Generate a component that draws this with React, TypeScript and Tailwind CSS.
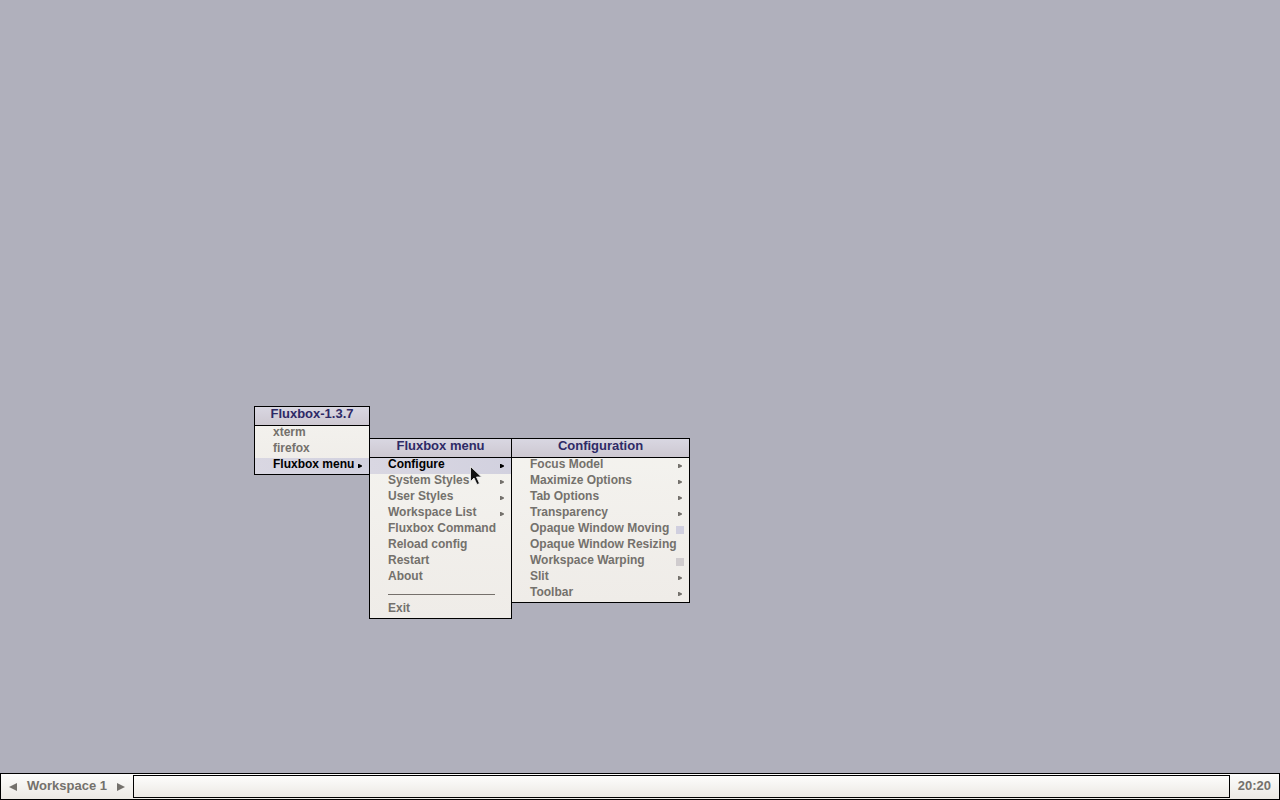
import type { CSSProperties } from 'react';

type Entry = {
  label: string;
  kind?: 'submenu' | 'toggle-on' | 'toggle-off' | 'separator';
  active?: boolean;
};

type MenuData = {
  title: string;
  x: number;
  y: number;
  width: number;
  entries: Entry[];
};

const menus: MenuData[] = [
  {
    title: 'Fluxbox-1.3.7',
    x: 254,
    y: 406,
    width: 116,
    entries: [
      { label: 'xterm' },
      { label: 'firefox' },
      { label: 'Fluxbox menu', kind: 'submenu', active: true },
    ],
  },
  {
    title: 'Fluxbox menu',
    x: 369,
    y: 438,
    width: 143,
    entries: [
      { label: 'Configure', kind: 'submenu', active: true },
      { label: 'System Styles', kind: 'submenu' },
      { label: 'User Styles', kind: 'submenu' },
      { label: 'Workspace List', kind: 'submenu' },
      { label: 'Fluxbox Command' },
      { label: 'Reload config' },
      { label: 'Restart' },
      { label: 'About' },
      { label: '', kind: 'separator' },
      { label: 'Exit' },
    ],
  },
  {
    title: 'Configuration',
    x: 511,
    y: 438,
    width: 179,
    entries: [
      { label: 'Focus Model', kind: 'submenu' },
      { label: 'Maximize Options', kind: 'submenu' },
      { label: 'Tab Options', kind: 'submenu' },
      { label: 'Transparency', kind: 'submenu' },
      { label: 'Opaque Window Moving', kind: 'toggle-on' },
      { label: 'Opaque Window Resizing' },
      { label: 'Workspace Warping', kind: 'toggle-off' },
      { label: 'Slit', kind: 'submenu' },
      { label: 'Toolbar', kind: 'submenu' },
    ],
  },
];

function Bullet() {
  return (
    <svg className="mr-[7px] h-1 w-1 shrink-0" viewBox="0 0 4 4" fill="currentColor" aria-hidden="true">
      <path d="M0 0H1L4 1.500V2.500L1 4H0Z" />
    </svg>
  );
}

function MenuEntry({ entry }: { entry: Entry }) {
  if (entry.kind === 'separator') {
    return (
      <li className="h-4 pt-2 pr-4 pl-[18px]" role="separator">
        <div className="h-px bg-[#75706b]" />
      </li>
    );
  }

  return (
    <li>
      <button
        type="button"
        className={`flex h-4 w-full items-center justify-between pl-[18px] text-left whitespace-nowrap ${
          entry.active ? 'bg-linear-to-r from-[#d9d7e2] to-[#d2d1df] text-black' : 'text-[#74716c]'
        }`}
      >
        <span className="h-4 leading-3">{entry.label}</span>
        {entry.kind === 'submenu' && <Bullet />}
        {entry.kind === 'toggle-on' && <span className="mr-[5px] size-2 shrink-0 bg-[#d0cfdf]" />}
        {entry.kind === 'toggle-off' && <span className="mr-[5px] size-2 shrink-0 bg-[#d0ccce]" />}
      </button>
    </li>
  );
}

function Menu({ menu }: { menu: MenuData }) {
  const place: CSSProperties = { left: menu.x, top: menu.y, width: menu.width };

  return (
    <section className="absolute border border-black bg-linear-to-b from-[#f4f3ef] to-[#efece8]" style={place}>
      <h2 className="h-[19px] border-b border-black bg-linear-to-b from-[#d9d7e2] to-[#cdc8d1] text-center text-[13px] leading-[14px] text-[#2e2a66]">
        {menu.title}
      </h2>
      <ul>
        {menu.entries.map((entry, index) => (
          <MenuEntry key={index} entry={entry} />
        ))}
      </ul>
    </section>
  );
}

function Toolbar() {
  return (
    <footer className="flex h-[27px] border border-black bg-linear-to-b from-[#fdfdfc] to-[#ece9e4] text-[#74716c]">
      <div className="flex items-center">
        <button type="button" aria-label="Previous workspace" className="px-2">
          <svg className="h-2 w-2" viewBox="0 0 8 8" fill="currentColor">
            <path d="M8 0V8L0 4Z" />
          </svg>
        </button>
        <span className="px-0.5 pb-0.5 text-[13px] leading-4">Workspace 1</span>
        <button type="button" aria-label="Next workspace" className="px-2">
          <svg className="h-2 w-2" viewBox="0 0 8 8" fill="currentColor">
            <path d="M0 0V8L8 4Z" />
          </svg>
        </button>
      </div>
      <div className="my-px flex-1 border border-black bg-linear-to-b from-[#fdfdfc] to-[#ece9e4]" />
      <time className="flex items-center px-2 pb-0.5 text-[13px]">20:20</time>
    </footer>
  );
}

export default function App() {
  return (
    <div className="flex h-screen flex-col overflow-hidden bg-[#b0b0bc] font-['Liberation_Sans',Arial,sans-serif] text-xs font-bold select-none">
      <main className="relative flex-1">
        {menus.map((menu) => (
          <Menu key={menu.title} menu={menu} />
        ))}
        <svg className="absolute top-[466px] left-[470px] h-5 w-3" viewBox="0 0 12 20" aria-hidden="true">
          <path d="M.5 .5V15.5L4 12L7 18.5L9.500 17.500L6.500 11H11.500Z" fill="#111" stroke="#f4f4f4" strokeWidth=".8" />
        </svg>
      </main>
      <Toolbar />
    </div>
  );
}
